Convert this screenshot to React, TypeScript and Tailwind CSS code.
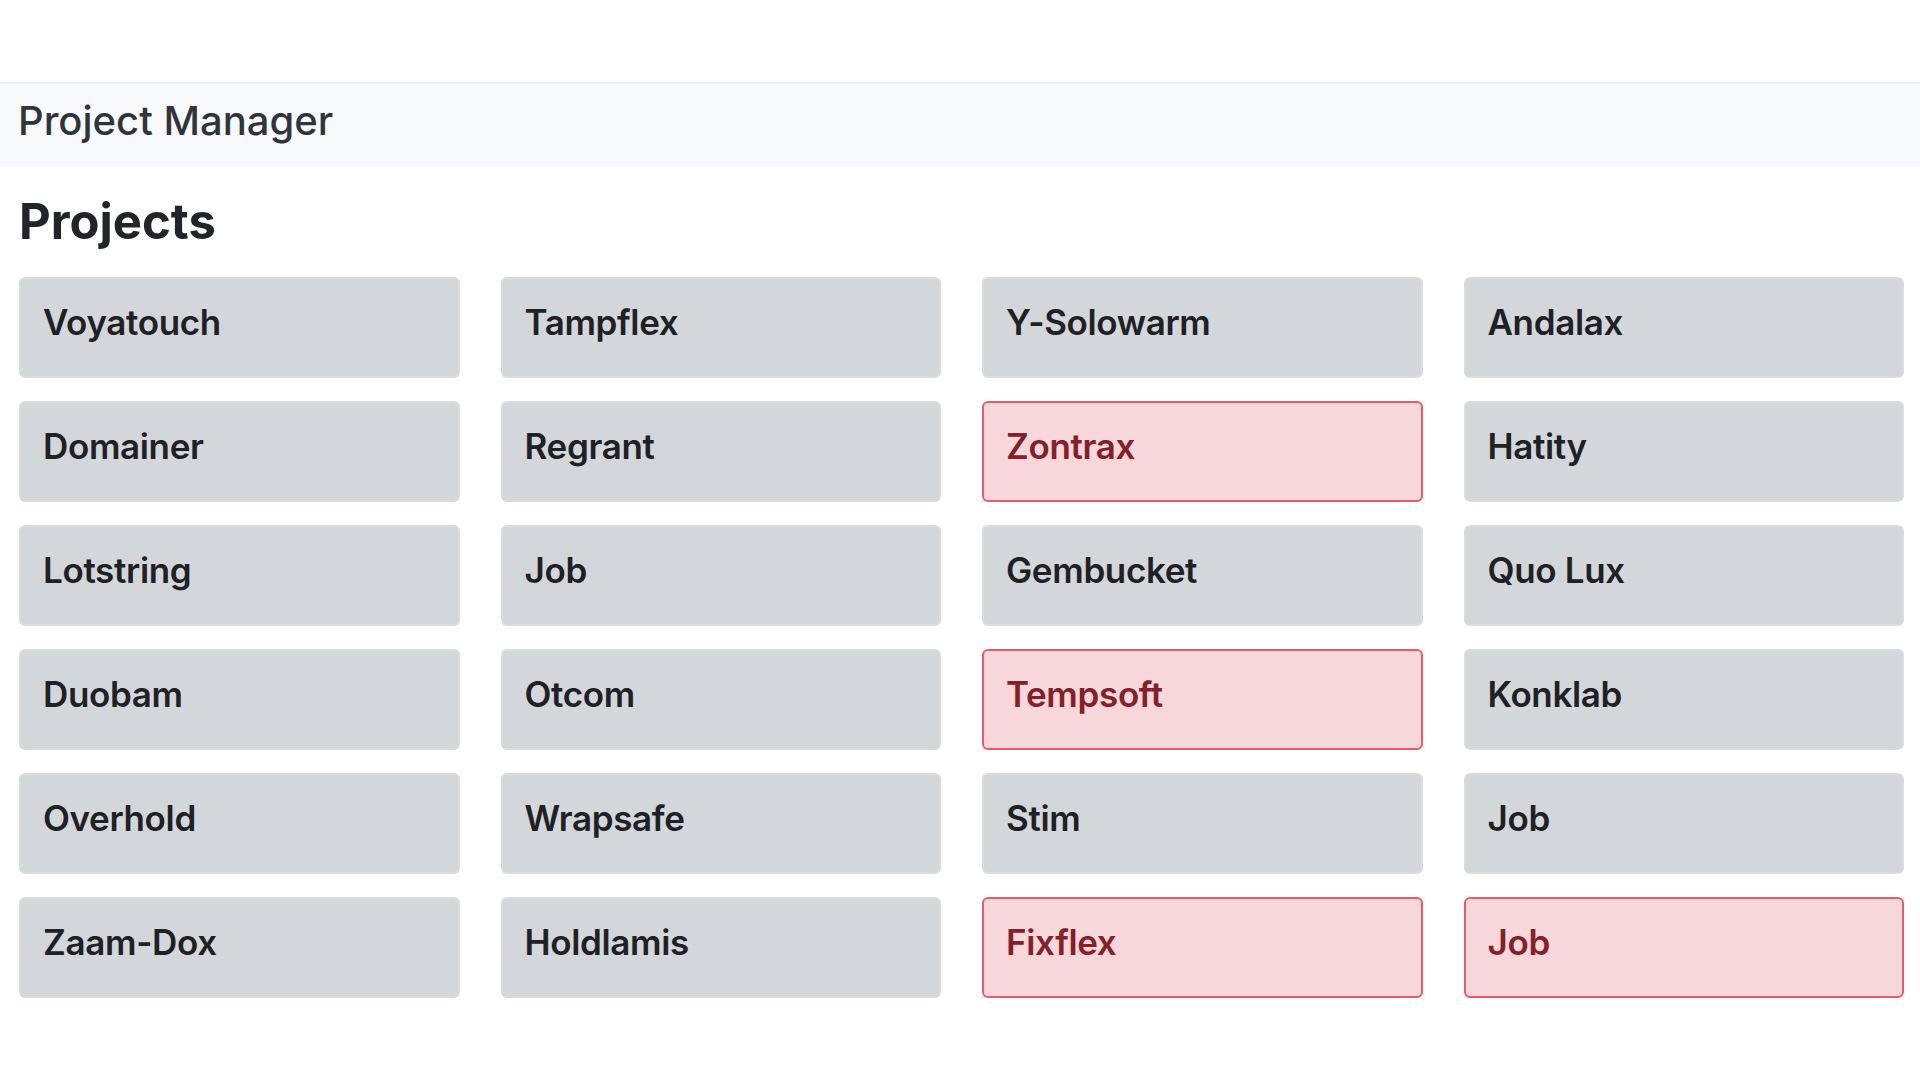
import React from "react";

type Project = { name: string; danger?: boolean };

const projects: Project[] = [
  { name: "Voyatouch" },
  { name: "Tampflex" },
  { name: "Y-Solowarm" },
  { name: "Andalax" },
  { name: "Domainer" },
  { name: "Regrant" },
  { name: "Zontrax", danger: true },
  { name: "Hatity" },
  { name: "Lotstring" },
  { name: "Job" },
  { name: "Gembucket" },
  { name: "Quo Lux" },
  { name: "Duobam" },
  { name: "Otcom" },
  { name: "Tempsoft", danger: true },
  { name: "Konklab" },
  { name: "Overhold" },
  { name: "Wrapsafe" },
  { name: "Stim" },
  { name: "Job" },
  { name: "Zaam-Dox" },
  { name: "Holdlamis" },
  { name: "Fixflex", danger: true },
  { name: "Job", danger: true },
];

function Card({ p }: { p: Project }) {
  return (
    <div
      className={
        p.danger
          ? "h-[101px] rounded-md border-2 border-[#e35d6a] bg-[#f8d7da] pl-[22px] pt-[22px]"
          : "h-[101px] rounded-md border-2 border-[#d9dbdd] bg-[#d4d7d9] pl-[22px] pt-[22px]"
      }
    >
      <div
        className={
          p.danger
            ? "text-[35px] leading-[42px] font-semibold tracking-[-0.01em] text-[#842029]"
            : "text-[35px] leading-[42px] font-semibold tracking-[-0.01em] text-[#1e2125]"
        }
      >
        {p.name}
      </div>
    </div>
  );
}

export default function App() {
  return (
    <div
      className="min-h-screen bg-white pt-[82px]"
      style={{ fontFamily: "Inter, 'Noto Sans', 'Liberation Sans', sans-serif" }}
    >
      <header className="h-[85px] border-t-2 border-[#eceef0] bg-[#f8f9fa] pl-[18px] pt-[13px]">
        <span className="text-[40px] leading-[48px] font-medium text-[#2f353b]">
          Project Manager
        </span>
      </header>
      <main className="pl-[19px] pr-[16px] pt-[26px]">
        <h2 className="mb-[26px] text-[49px] leading-[58px] font-bold text-[#212529]">
          Projects
        </h2>
        <div className="grid grid-cols-4 gap-x-[41px] gap-y-[23px]">
          {projects.map((p, i) => (
            <Card key={i} p={p} />
          ))}
        </div>
      </main>
    </div>
  );
}
